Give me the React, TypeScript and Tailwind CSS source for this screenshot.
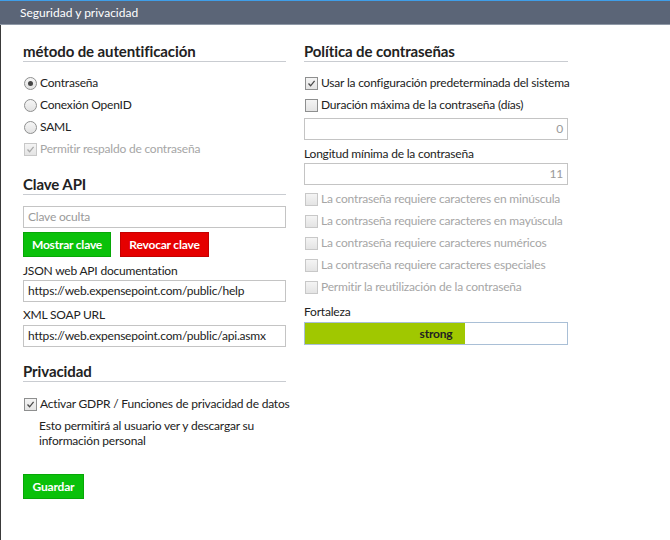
import React from 'react';

const font = { fontFamily: 'Lato, "Open Sans", sans-serif' };

function Check({ checked, disabled }: { checked?: boolean; disabled?: boolean }) {
    return (
        <span
            className={`w-[13px] h-[13px] shrink-0 border bg-gradient-to-b from-[#f4f4f4] to-[#e4e4e4] flex items-center justify-center ${
                disabled ? 'border-[#c8c8c8]' : 'border-[#8e8f8f]'
            }`}>
            {checked && (
                <svg width="9" height="9" viewBox="0 0 9 9">
                    <path
                        d="M1.5 4.5 L3.6 6.8 L7.6 1.8"
                        fill="none"
                        stroke={disabled ? '#a8a8a8' : '#4a4a4a'}
                        strokeWidth="1.3"
                    />
                </svg>
            )}
        </span>
    );
}

function Radio({ checked }: { checked?: boolean }) {
    return (
        <span className="w-[13px] h-[13px] shrink-0 rounded-full border border-[#8e8f8f] bg-gradient-to-b from-[#f6f6f6] to-[#e2e2e2] flex items-center justify-center">
            {checked && <span className="w-[5px] h-[5px] rounded-full bg-[#444]" />}
        </span>
    );
}

function Row({ children, disabled }: { children: React.ReactNode; disabled?: boolean }) {
    return (
        <div
            className={`h-[22px] flex items-center gap-[3px] pl-px whitespace-nowrap ${
                disabled ? 'text-[#a6a6a6]' : 'text-[#222]'
            }`}>
            {children}
        </div>
    );
}

function Heading({ children }: { children: React.ReactNode }) {
    return (
        <div className="text-[15px] font-bold leading-[19px] tracking-[-0.1px] text-[#222] border-b border-[#c9ccd1]">
            {children}
        </div>
    );
}

function Input({ value, placeholder, right }: { value?: string; placeholder?: string; right?: boolean }) {
    return (
        <div
            className={`h-[22px] border border-[#c4c4c4] bg-white px-[4px] flex items-center whitespace-nowrap ${
                right ? 'justify-end text-[#9a9a9a]' : 'text-[#222]'
            }`}>
            {value ?? <span className="text-[#9a9a9a]">{placeholder}</span>}
        </div>
    );
}

export default function App() {
    const rules = [
        'La contraseña requiere caracteres en minúscula',
        'La contraseña requiere caracteres en mayúscula',
        'La contraseña requiere caracteres numéricos',
        'La contraseña requiere caracteres especiales',
        'Permitir la reutilización de la contraseña',
    ];

    return (
        <div style={font} className="w-[670px] h-[540px] bg-white text-[12px] tracking-[-0.2px] text-[#222] overflow-hidden">
            <div className="border-t border-[#3f9ee8] bg-[#5b6577] h-[25px] border-b border-b-[#8f99a7] pl-[20px] flex items-center text-white text-[12px] tracking-normal">
                Seguridad y privacidad
            </div>
            <div className="border-l border-[#3a3a3a] h-[515px] flex gap-[18px] pl-[22px] pt-[17px]">
                {/* left column */}
                <div className="w-[263px]">
                    <Heading>método de autentificación</Heading>
                    <div className="mt-[10px]">
                        <Row>
                            <Radio checked />
                            Contraseña
                        </Row>
                        <Row>
                            <Radio />
                            Conexión OpenID
                        </Row>
                        <Row>
                            <Radio />
                            SAML
                        </Row>
                        <Row disabled>
                            <Check checked disabled />
                            Permitir respaldo de contraseña
                        </Row>
                    </div>

                    <div className="mt-[15px]">
                        <Heading>Clave API</Heading>
                    </div>
                    <div className="mt-[11px]">
                        <Input placeholder="Clave oculta" />
                    </div>
                    <div className="mt-[4px] flex gap-[9px]">
                        <button className="h-[25px] w-[88px] bg-[#0ac10a] border border-[#07a707] text-white font-bold">
                            Mostrar clave
                        </button>
                        <button className="h-[25px] w-[89px] bg-[#e50000] border border-[#c40000] text-white font-bold">
                            Revocar clave
                        </button>
                    </div>
                    <div className="h-[23px] pt-[4px] leading-[20px]">JSON web API documentation</div>
                    <Input value="https://web.expensepoint.com/public/help" />
                    <div className="h-[23px] pt-[3px] leading-[20px]">XML SOAP URL</div>
                    <Input value="https://web.expensepoint.com/public/api.asmx" />

                    <div className="mt-[15px]">
                        <Heading>Privacidad</Heading>
                    </div>
                    <div className="mt-[11px]">
                        <Row>
                            <Check checked />
                            Activar GDPR / Funciones de privacidad de datos
                        </Row>
                        <p className="pl-[16px] mt-[3px] leading-[15px]">
                            Esto permitirá al usuario ver y descargar su
                            <br />
                            información personal
                        </p>
                    </div>
                    <button className="mt-[26px] h-[25px] w-[61px] bg-[#0ac10a] border border-[#07a707] text-white font-bold">
                        Guardar
                    </button>
                </div>

                {/* right column */}
                <div className="w-[264px]">
                    <Heading>Política de contraseñas</Heading>
                    <div className="mt-[10px]">
                        <Row>
                            <Check checked />
                            Usar la configuración predeterminada del sistema
                        </Row>
                        <Row>
                            <Check />
                            Duración máxima de la contraseña (días)
                        </Row>
                    </div>
                    <div className="mt-[2px]">
                        <Input value="0" right />
                    </div>
                    <div className="h-[23px] pt-[4px] leading-[20px]">Longitud mínima de la contraseña</div>
                    <Input value="11" right />
                    <div className="mt-[3px]">
                        {rules.map((r) => (
                            <Row key={r} disabled>
                                <Check disabled />
                                {r}
                            </Row>
                        ))}
                    </div>
                    <div className="h-[24px] pt-[4px] leading-[20px]">Fortaleza</div>
                    <div className="relative h-[23px] border border-[#a9bfd6] bg-white flex">
                        <div className="w-[61%] bg-[#a0c800]" />
                        <span className="absolute inset-0 flex items-center justify-center font-bold text-[#222]">
                            strong
                        </span>
                    </div>
                </div>
            </div>
        </div>
    );
}
